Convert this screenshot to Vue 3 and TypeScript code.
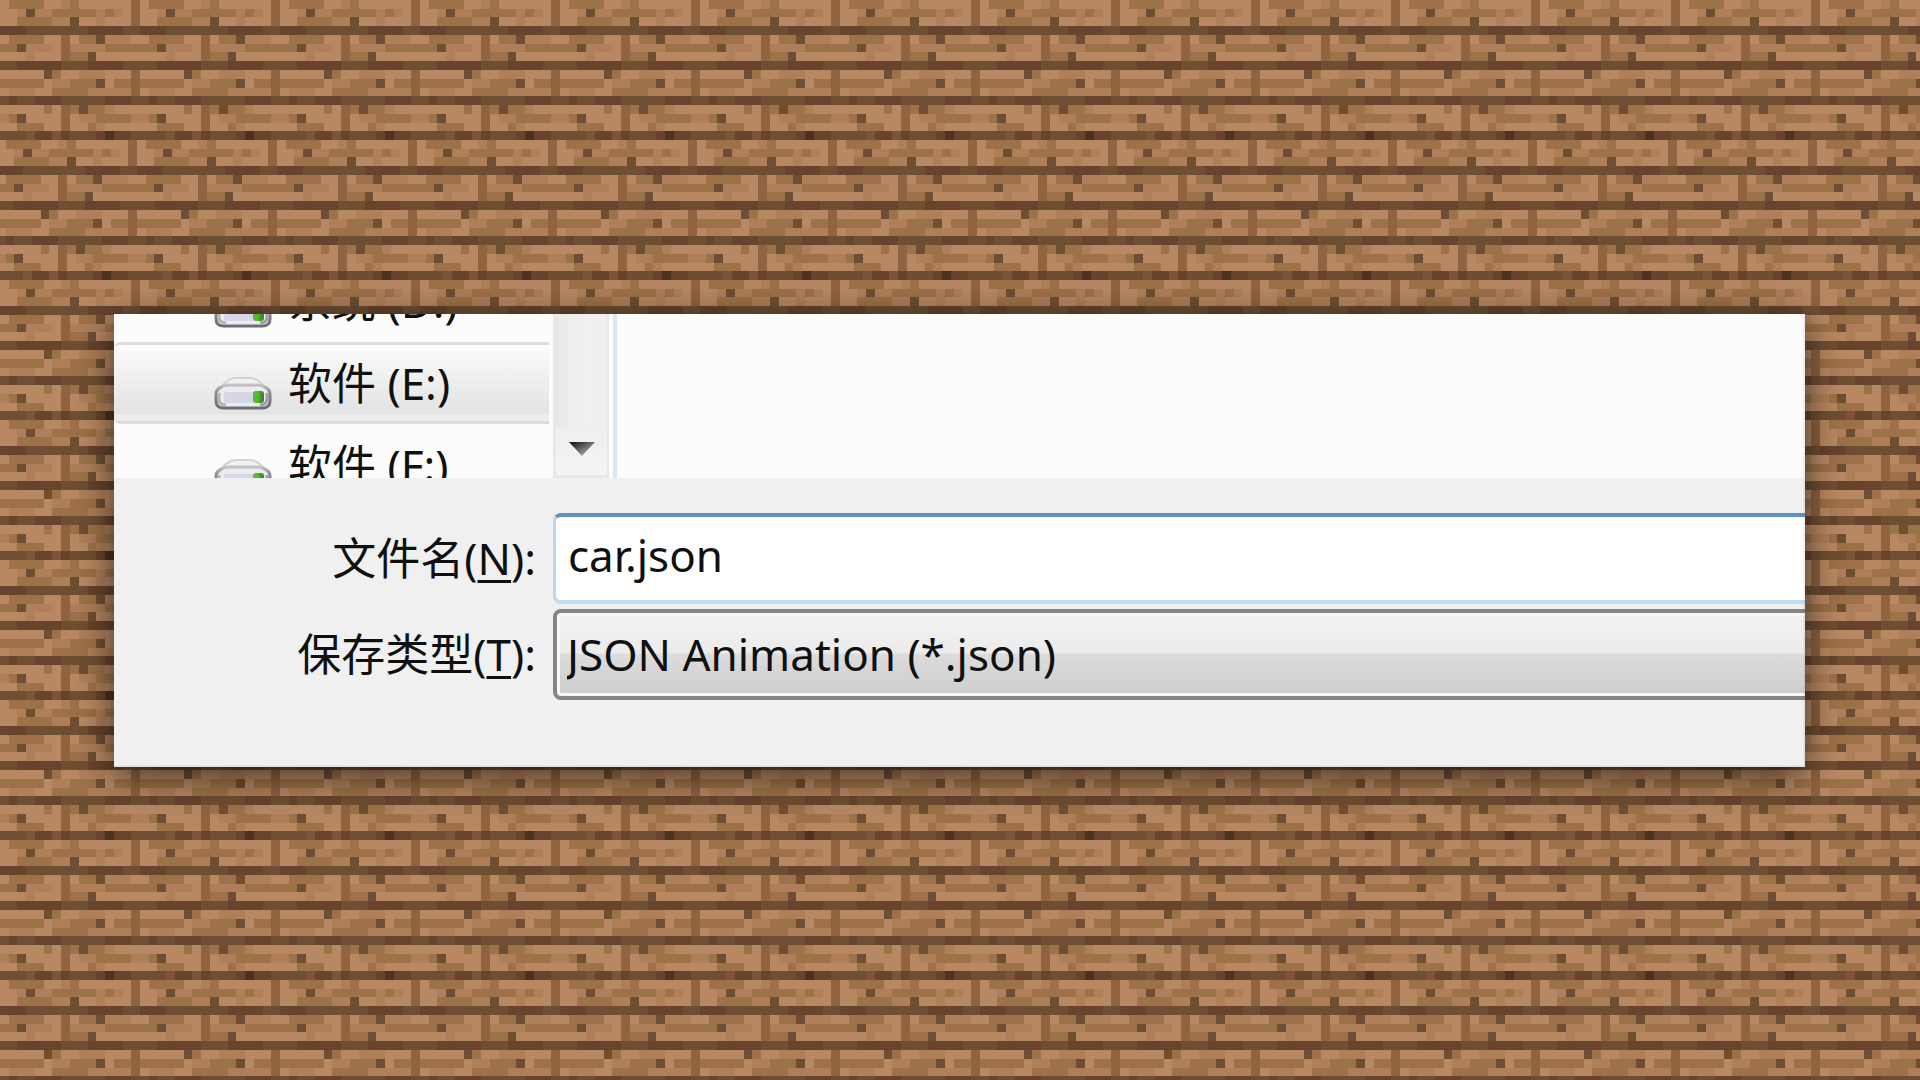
<script setup lang="ts">
import { ref } from 'vue'

interface Drive {
  letter: string
  name: string
  selected: boolean
}

const drives: Drive[] = [
  { letter: 'D', name: '系统', selected: false },
  { letter: 'E', name: '软件', selected: true },
  { letter: 'F', name: '软件', selected: false },
]

const fileName = ref('car.json')
const fileType = ref('json')

// 16 x 16 wooden plank tile, one letter per texel
const planks = [
  'accccaabcaaaaaad',
  'aabebbcccccbcbad',
  'aaccccbbeaabaaad',
  'fffeeeeeeeffffee',
  'accccaadaccebbba',
  'ccebbbadbbbbcccc',
  'aaabaaadcceaaaaa',
  'eefffffeeeffffee',
  'aaaaaecaabbbaaad',
  'cccccabbccceaccd',
  'abbbaaccccbbbbbd',
  'efeefffeeeeefffe',
  'aaaaacadceccbaaa',
  'bceaaaadabbccccb',
  'aacccaadaacbaaaa',
  'eeegffgfeeefhffe',
]

const palette: Record<string, string> = {
  a: '#b88863',
  b: '#af7f5a',
  c: '#9e7248',
  d: '#906341',
  e: '#6f4f33',
  f: '#68442e',
  g: '#7d533a',
  h: '#4b3222',
}

// texel edges inside the 140px tile
const edges = [0, 9, 17, 26, 35, 44, 52, 61, 70, 79, 88, 96, 105, 114, 123, 131, 140]

const texels = planks.flatMap((row, r) =>
  [...row].map((key, c) => ({
    x: edges[c],
    y: edges[r],
    w: edges[c + 1] - edges[c],
    h: edges[r + 1] - edges[r],
    fill: palette[key],
  })),
)
</script>

<template>
  <main class="page">
    <svg class="wood" width="100%" height="100%" aria-hidden="true">
      <defs>
        <pattern id="planks" width="140" height="140" patternUnits="userSpaceOnUse">
          <rect
            v-for="(t, i) in texels"
            :key="i"
            :x="t.x"
            :y="t.y"
            :width="t.w"
            :height="t.h"
            :fill="t.fill"
            shape-rendering="crispEdges"
          />
        </pattern>
        <pattern id="planks-shifted" href="#planks" x="-3" />
      </defs>
      <rect width="100%" height="100%" fill="url(#planks)" />
      <rect y="140" width="100%" height="140" fill="url(#planks-shifted)" />
    </svg>

    <section class="dialog">
      <div class="browser">
        <nav class="sidebar">
          <ul class="drives">
            <li v-for="d in drives" :key="d.letter" class="drive" :class="{ selected: d.selected }">
              <svg class="drive-icon" viewBox="0 0 58 36" width="58" height="36" aria-hidden="true">
                <defs>
                  <linearGradient :id="'shell-' + d.letter" x1="0" y1="0" x2="0" y2="1">
                    <stop offset="0" stop-color="#c4c4c6" />
                    <stop offset="0.3" stop-color="#8e8e94" />
                    <stop offset="1" stop-color="#6c6c74" />
                  </linearGradient>
                  <linearGradient :id="'led-' + d.letter">
                    <stop offset="0" stop-color="#7d9a78" />
                    <stop offset="0.45" stop-color="#45c314" />
                    <stop offset="0.7" stop-color="#3f9c1c" />
                    <stop offset="1" stop-color="#5c605e" />
                  </linearGradient>
                </defs>
                <path d="M9 10 Q14 4 21 3 H37 Q44 4 49 10 Z" fill="#f2f2f2" stroke="#d2d2d2" stroke-width="2" />
                <path
                  d="M9 11 Q11 10 14 10 H44 Q47 10 49 11 Q56 14 56 19 V26 Q56 33 48 33 H10 Q2 33 2 26 V19 Q2 14 9 11 Z"
                  fill="#ececee"
                  :stroke="`url(#shell-${d.letter})`"
                  stroke-width="3"
                />
                <path d="M5 18 V25 Q6 30 12 30" fill="none" stroke="#b4b4b8" stroke-width="3" />
                <path d="M53 18 V25 Q52 30 46 30" fill="none" stroke="#a0a0a4" stroke-width="3" />
                <rect x="10" y="17" width="30" height="11" rx="2" fill="#d6d7e6" />
                <rect x="39" y="16" width="11" height="12" rx="3" :fill="`url(#led-${d.letter})`" />
              </svg>
              <span>{{ d.name }} ({{ d.letter }}:)</span>
            </li>
          </ul>
        </nav>
        <div class="scrollbar">
          <button class="scroll-down" type="button" aria-label="向下滚动">
            <svg viewBox="0 0 28 18" width="28" height="18" aria-hidden="true">
              <defs>
                <linearGradient id="arrow" x1="0" y1="0" x2="1" y2="1">
                  <stop offset="0.1" stop-color="#1c1c1c" />
                  <stop offset="0.9" stop-color="#c0c0c0" />
                </linearGradient>
              </defs>
              <path d="M1 2 H27 L14 16 Z" fill="url(#arrow)" />
            </svg>
          </button>
        </div>
        <div class="files"></div>
      </div>

      <form class="fields" @submit.prevent>
        <label for="file-name">文件名(<u>N</u>):</label>
        <input id="file-name" v-model="fileName" class="control name" type="text" accesskey="n" spellcheck="false" />
        <label for="file-type">保存类型(<u>T</u>):</label>
        <select id="file-type" v-model="fileType" class="control type" accesskey="t">
          <option value="json">JSON Animation (*.json)</option>
        </select>
      </form>
    </section>
  </main>
</template>

<style>
body {
  margin: 0;
}
</style>

<style scoped>
.page {
  position: relative;
  box-sizing: border-box;
  min-height: 100vh;
  padding: 0 115px 0 114px;
  display: flex;
  align-items: center;
  overflow: hidden;
  color: #101010;
  font-family: "Noto Sans", "Noto Sans CJK SC", sans-serif;
  font-size: 44px;
}

.wood {
  position: absolute;
  inset: 0;
}

.dialog {
  position: relative;
  flex: 1;
  min-width: 0;
  background: #f0f0f0;
  box-shadow: 0 8px 36px rgba(0, 0, 0, 0.65);
}

.dialog::after {
  content: "";
  position: absolute;
  inset: 0;
  pointer-events: none;
  box-shadow: inset -2px -2px rgba(30, 30, 60, 0.06);
}

.browser {
  display: flex;
  height: 164px;
  overflow: hidden;
  background: #fcfcfc;
}

.sidebar {
  width: 435px;
  overflow: hidden;
}

.drives {
  list-style: none;
  margin: -54px 0 0;
  padding: 0;
}

.drive {
  box-sizing: border-box;
  height: 82px;
  padding-left: 100px;
  display: flex;
  align-items: center;
  gap: 16px;
  line-height: 60px;
  white-space: nowrap;
}

.drive-icon {
  margin-top: 20px;
}

.selected {
  border: solid #dcdcdc;
  border-width: 3px 0;
  border-radius: 6px 0 0 6px;
  background: linear-gradient(#fafbfb, #e3e3e3 90%, #ececec 92%);
}

.scrollbar {
  box-sizing: border-box;
  width: 56px;
  margin: 0 4px;
  display: flex;
  align-items: flex-end;
  border: solid #e8e8e8;
  border-width: 0 2px 3px 3px;
  background: linear-gradient(90deg, #e9e9e9, #f0f0f0 50%, #efefef);
}

.scroll-down {
  width: 100%;
  height: 46px;
  padding: 0 0 6px;
  display: flex;
  align-items: center;
  justify-content: center;
  border: 0;
  background: linear-gradient(#efefef, #f4f4f4);
}

.files {
  flex: 1;
  border-left: 4px solid #dbe9f6;
}

.fields {
  display: grid;
  grid-template-columns: 422px 1fr;
  grid-auto-rows: 91px;
  column-gap: 17px;
  row-gap: 5px;
  padding: 35px 0 67px;
  overflow: hidden;
}

label {
  align-self: center;
  text-align: right;
  line-height: 60px;
  white-space: nowrap;
}

u {
  text-decoration-thickness: 3px;
  text-underline-offset: 5px;
}

.control {
  box-sizing: border-box;
  min-width: 0;
  height: 91px;
  margin: 0 -8px 0 0;
  border-radius: 8px;
  outline: 0;
  color: #101010;
  font-family: inherit;
  font-size: 44px;
}

.name {
  padding: 0 12px 6px;
  border: 3px solid #b9d6ec;
  border-top: 4px solid #5f93bd;
  border-bottom: 4px solid #c0dded;
  background: #fff;
}

.type {
  appearance: none;
  padding: 0 10px;
  border: 4px solid #858585;
  background: linear-gradient(#f3f3f3, #ebebeb 48%, #dcdcdc 50%, #cdcdcd);
  box-shadow: inset 0 0 0 3px #f8f8f8;
}
</style>
